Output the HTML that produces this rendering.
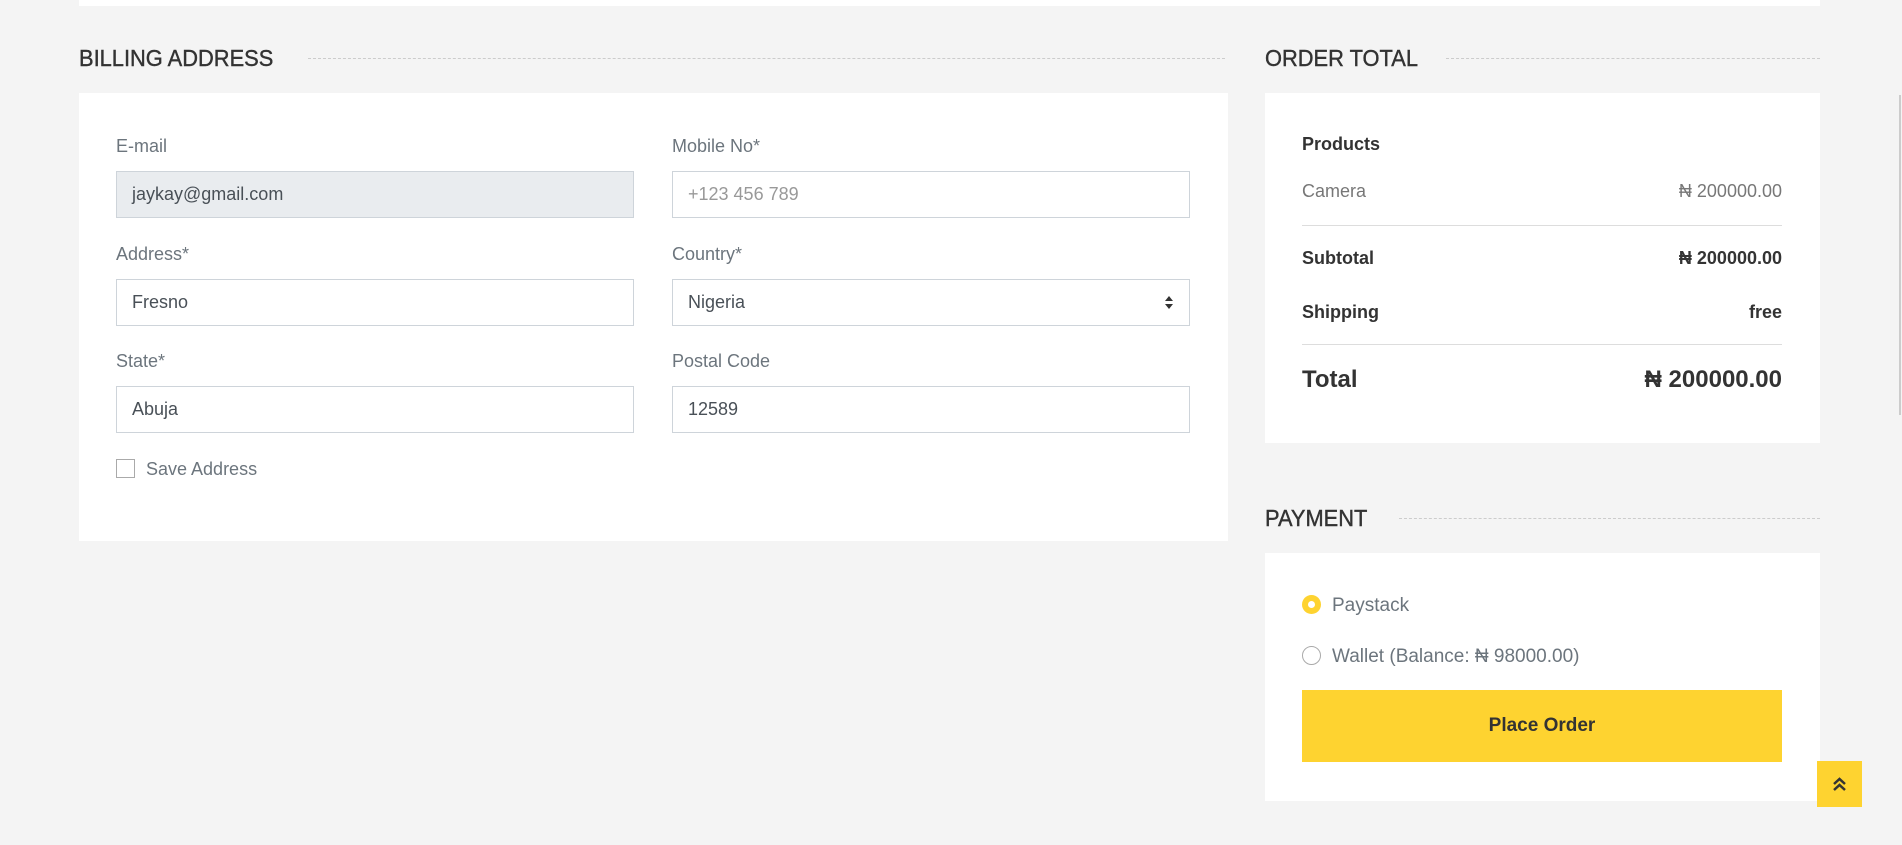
<!DOCTYPE html>
<html><head><meta charset="utf-8"><style>
*{box-sizing:border-box;margin:0;padding:0}
body{width:1902px;height:845px;background:#f4f4f4;font-family:"Liberation Sans",sans-serif;position:relative;overflow:hidden;color:#333}
.abs{position:absolute}
.topbar{left:79px;top:0;width:1741px;height:6px;background:#fff}
.h{font-size:23px;color:#333;white-space:nowrap;line-height:1;-webkit-text-stroke:0.4px #333;transform:scaleX(0.95);transform-origin:left}
.dot{height:0;border-top:1px dashed #ccc}
.card{background:#fff}
.lbl{font-size:18px;color:#6c757d;line-height:1}
.inp{height:47px;border:1px solid #ced4da;background:#fff;font-size:18px;color:#495057;padding-left:15px;line-height:45px}
.row{left:1302px;width:480px;display:flex;justify-content:space-between;line-height:1}
.hr{left:1302px;width:480px;border-top:1px solid #ddd}
</style></head><body>
<div class="abs topbar"></div>

<div class="abs h" style="left:79px;top:47px">BILLING ADDRESS</div>
<div class="abs dot" style="left:308px;top:58px;width:917px"></div>
<div class="abs card" style="left:79px;top:93px;width:1149px;height:448px"></div>

<div class="abs lbl" style="left:116px;top:137px">E-mail</div>
<div class="abs inp" style="left:116px;top:171px;width:518px;background:#e9ecef">jaykay@gmail.com</div>
<div class="abs lbl" style="left:672px;top:137px">Mobile No*</div>
<div class="abs inp" style="left:672px;top:171px;width:518px;color:#999">+123 456 789</div>

<div class="abs lbl" style="left:116px;top:245px">Address*</div>
<div class="abs inp" style="left:116px;top:279px;width:518px">Fresno</div>
<div class="abs lbl" style="left:672px;top:245px">Country*</div>
<div class="abs inp" style="left:672px;top:279px;width:518px">Nigeria<svg style="position:absolute;right:15px;top:15px" width="10" height="15" viewBox="0 0 10 15"><path d="M5 1L9 6H1zM5 14L1 9h8z" fill="#333"/></svg></div>

<div class="abs lbl" style="left:116px;top:352px">State*</div>
<div class="abs inp" style="left:116px;top:386px;width:518px">Abuja</div>
<div class="abs lbl" style="left:672px;top:352px">Postal Code</div>
<div class="abs inp" style="left:672px;top:386px;width:518px">12589</div>

<div class="abs" style="left:116px;top:459px;width:19px;height:19px;border:1px solid #aaa;background:#fff"></div>
<div class="abs lbl" style="left:146px;top:460px">Save Address</div>

<div class="abs h" style="left:1265px;top:47px">ORDER TOTAL</div>
<div class="abs dot" style="left:1446px;top:58px;width:374px"></div>
<div class="abs card" style="left:1265px;top:93px;width:555px;height:350px"></div>
<div class="abs" style="left:1302px;top:134px;font-size:18px;color:#333;font-weight:600">Products</div>
<div class="abs row" style="top:182px;font-size:18px;color:#777"><span>Camera</span><span>₦ 200000.00</span></div>
<div class="abs hr" style="top:225px"></div>
<div class="abs row" style="top:249px;font-size:18px;font-weight:bold;color:#333"><span>Subtotal</span><span>₦ 200000.00</span></div>
<div class="abs row" style="top:303px;font-size:18px;font-weight:bold;color:#333"><span>Shipping</span><span>free</span></div>
<div class="abs hr" style="top:344px"></div>
<div class="abs row" style="top:368px;font-size:24px;font-weight:bold;color:#333"><span>Total</span><span>₦ 200000.00</span></div>

<div class="abs h" style="left:1265px;top:507px">PAYMENT</div>
<div class="abs dot" style="left:1399px;top:518px;width:421px"></div>
<div class="abs card" style="left:1265px;top:553px;width:555px;height:248px"></div>
<div class="abs" style="left:1302px;top:595px;width:19px;height:19px;border-radius:50%;background:#fed330;"><div style="position:absolute;left:6px;top:6px;width:7px;height:7px;border-radius:50%;background:#fff"></div></div>
<div class="abs lbl" style="left:1332px;top:596px;font-size:19px">Paystack</div>
<div class="abs" style="left:1302px;top:646px;width:19px;height:19px;border-radius:50%;border:1px solid #aaa;background:#fff"></div>
<div class="abs lbl" style="left:1332px;top:647px;font-size:19px">Wallet (Balance: ₦ 98000.00)</div>
<div class="abs" style="left:1302px;top:690px;width:480px;height:72px;background:#fed330;text-align:center;line-height:72px;font-size:19px;font-weight:bold;color:#333">Place Order</div>

<div class="abs" style="left:1817px;top:761px;width:45px;height:46px;background:#fed330">
<svg width="45" height="46" viewBox="0 0 45 46"><path d="M17 23l5.5-5 5.5 5M17 29l5.5-5 5.5 5" fill="none" stroke="#333" stroke-width="2.5"/></svg></div>
<div class="abs" style="left:1899px;top:95px;width:2px;height:320px;background:#ccc"></div>
</body></html>
